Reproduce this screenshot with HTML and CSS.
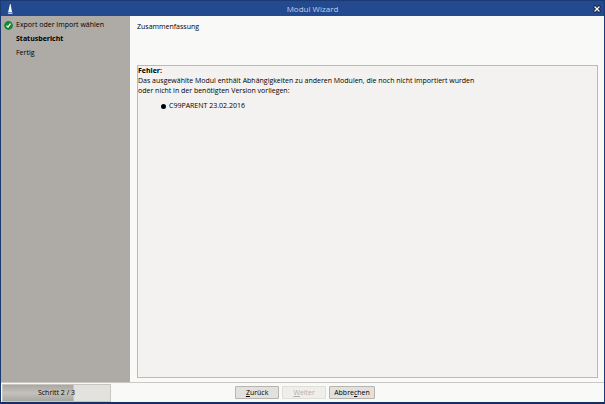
FILE: index.html
```html
<!DOCTYPE html>
<html lang="de">
<head>
<meta charset="utf-8">
<meta name="viewport" content="width=device-width, initial-scale=1">
<title>Modul Wizard</title>
<link rel="stylesheet" href="styles.css">
</head>
<body>
<div class="window">
  <header class="titlebar">
    <svg class="logo" viewBox="0 0 8 12" aria-hidden="true">
      <path d="M4 1 L4.6 1 L6 9 L2.2 9 Z" fill="#fff"/>
      <path d="M1.500 9.500 H7 L6 11 H2.500 Z" fill="#c3cde0"/>
    </svg>
    <h1 class="title">Modul Wizard</h1>
    <button class="close" type="button" aria-label="Schließen">
      <svg viewBox="0 0 8 8" aria-hidden="true">
        <path d="M2 2 L6 6 M6 2 L2 6" stroke="#131b30" stroke-width="3" stroke-linecap="square"/>
        <path d="M2 2 L6 6 M6 2 L2 6" stroke="#fff" stroke-width="1.300" stroke-linecap="square"/>
      </svg>
    </button>
  </header>
  <div class="body">
    <nav class="sidebar">
      <ol class="steps">
        <li class="step">
          <svg class="check" viewBox="0 0 9 9" aria-hidden="true">
            <circle cx="4.500" cy="4.500" r="4.400" fill="#128a35"/>
            <path d="M2.500 4.600 L4 6.100 L6.500 2.700" fill="none" stroke="#fff" stroke-width="1.300"/>
          </svg>
          <span>Export oder Import wählen</span>
        </li>
        <li class="step current" aria-current="step">Statusbericht</li>
        <li class="step">Fertig</li>
      </ol>
    </nav>
    <main class="content">
      <h2 class="heading">Zusammenfassung</h2>
      <section class="report">
        <strong>Fehler:</strong>
        <p>Das ausgewählte Modul enthält Abhängigkeiten zu anderen Modulen, die noch nicht importiert wurden<br>oder nicht in der benötigten Version vorliegen:</p>
        <ul class="modules">
          <li>C99PARENT 23.02.2016</li>
        </ul>
      </section>
    </main>
  </div>
  <footer class="footer">
    <div class="progress" role="progressbar" aria-valuemin="0" aria-valuemax="3" aria-valuenow="2" aria-label="Fortschritt">Schritt 2 / 3</div>
    <div class="actions">
      <button type="button"><u>Z</u>urück</button>
      <button type="button" disabled><u>W</u>eiter</button>
      <button type="button">Abbre<u>c</u>hen</button>
    </div>
  </footer>
</div>
</body>
</html>
```
FILE: styles.css
```css
* {
  box-sizing: border-box;
}

body {
  margin: 0;
  font: 7px/10px "Open Sans", "Noto Sans", sans-serif;
  color: #000;
}

h1, h2, p, ol, ul {
  margin: 0;
  padding: 0;
  font-size: inherit;
  font-weight: normal;
  list-style: none;
}

button {
  font: inherit;
  color: inherit;
}

.window {
  display: flex;
  flex-direction: column;
  height: 100vh;
  background: #f9f9f7;
  border: 1px solid #1b3973;
  border-bottom: 2px solid #14305f;
}

.titlebar {
  display: flex;
  align-items: center;
  height: 15px;
  padding: 0 3px 0 5px;
  background: #23498f;
  color: #c3cee4;
}

.logo {
  width: 8px;
  height: 12px;
}

.title {
  flex: 1;
  padding-left: 18px;
  font-size: 8px;
  text-align: center;
}

.close {
  display: flex;
  padding: 0;
  border: 0;
  background: none;
}

.close svg {
  width: 8px;
  height: 8px;
}

.body {
  flex: 1;
  display: flex;
  min-height: 0;
}

.sidebar {
  flex: 0 0 129px;
  padding: 4px 3px;
  background: #aeaaa5;
}

.steps {
  display: grid;
  gap: 4px;
}

.step {
  display: flex;
  align-items: center;
  padding-left: 12px;
}

.check {
  width: 9px;
  height: 9px;
  margin: 0 3px 0 -12px;
}

.current,
.report strong {
  font-weight: bold;
}

.content {
  flex: 1;
  display: flex;
  flex-direction: column;
  gap: 33px;
  padding: 6px 6px 4px 7px;
}

.report {
  flex: 1;
  border: 1px solid #bdb9b6;
  background: #f3f2f0;
}

.modules {
  padding: 5px 0 0 23px;
}

.modules li {
  display: flex;
  align-items: center;
  gap: 3px;
}

.modules li::before {
  content: "";
  width: 5px;
  height: 5px;
  border-radius: 50%;
  background: #000;
}

.footer {
  display: grid;
  grid-template-columns: 1fr auto 1fr;
  align-items: center;
  height: 20px;
  padding-left: 1px;
  border-top: 1px solid #cbc7c3;
}

.progress {
  width: 109px;
  height: 18px;
  border: 1px solid #c9c6c1;
  background: linear-gradient(#aaa6a1, #c4c1bc 50%, #aaa6a1) 0 0 / 66% 100% no-repeat #e4e2de;
  line-height: 16px;
  text-align: center;
}

.actions {
  display: flex;
  gap: 3px;
  padding-left: 4px;
}

.actions button {
  min-width: 44px;
  height: 13px;
  padding: 0 4px;
  border: 1px solid #b8b5b0;
  border-radius: 1px;
  background: #e3e1dd;
  line-height: 10px;
}

.actions button:disabled {
  border-color: #e0deda;
  background: #efeeeb;
  color: #b0aeab;
}
```
